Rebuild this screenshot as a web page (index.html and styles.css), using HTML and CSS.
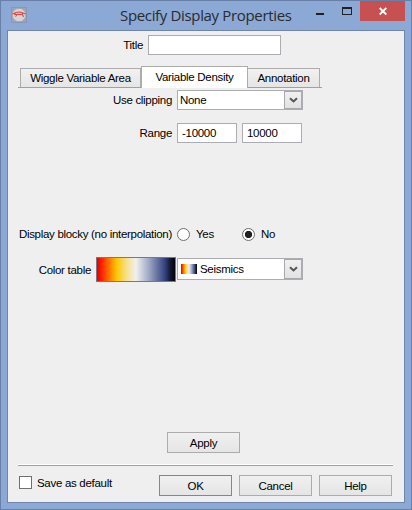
FILE: index.html
```html
<!DOCTYPE html>
<html lang="en">
<head>
<meta charset="utf-8">
<title>Specify Display Properties</title>
<link rel="stylesheet" href="styles.css">
</head>
<body>
<div class="window">
  <header class="titlebar">
    <svg class="app-icon" width="16" height="16" viewBox="0 0 16 16">
      <rect x=".5" y=".5" width="15" height="15" fill="#98a5c0" stroke="#8797b6"/>
      <circle cx="8" cy="8" r="6.8" fill="#d6d5d5" stroke="#aaa6aa"/>
      <path d="M1.500 7 5 5.500l3-.5 3 .5 3.500 1.500M4.500 5.500 3.500 8M4 7.500h7M11 5.500l1.500 4.500M6.500 7l-2 2.500" fill="none" stroke="#e64748" stroke-width="1.100"/>
    </svg>
    <h1 class="caption">Specify Display Properties</h1>
    <div class="controls">
      <svg width="26" height="20"><path d="M0 13h8v2H0z" fill="#1f1f1f"/></svg>
      <svg width="18" height="20"><path fill-rule="evenodd" d="M0 7h10v8H0zM1 9v5h8V9z" fill="#222"/></svg>
      <div class="close"><svg width="45" height="20"><path d="m19.700 8 6.600 6.500m0-6.500-6.600 6.500" stroke="#fff" stroke-width="1.800"/></svg></div>
    </div>
  </header>
  <main class="client">
    <div class="row title-row"><label class="label t-title">Title</label><div class="field title-field"></div></div>
    <nav class="tabs">
      <div class="tab wiggle"><span>Wiggle Variable Area</span></div>
      <div class="tab active"><span>Variable Density</span></div>
      <div class="tab annotation"><span>Annotation</span></div>
    </nav>
    <div class="row clip-row"><label class="label">Use clipping</label>
      <div class="combo"><span class="value">None</span><span class="arrow"><svg width="9" height="7"><path d="m1 1.300 3.500 3.200L8 1.300" fill="none" stroke="#555" stroke-width="2"/></svg></span></div>
    </div>
    <div class="row range-row"><label class="label">Range</label><div class="field number">-10000</div><div class="field number">10000</div></div>
    <div class="row blocky-row"><label class="label">Display blocky (no interpolation)</label>
      <div class="option yes"><i class="radio"></i><span>Yes</span></div>
      <div class="option"><i class="radio checked"></i><span>No</span></div>
    </div>
    <div class="row color-row"><label class="label color-label">Color table</label><div class="ramp"></div>
      <div class="combo color-combo"><i class="swatch"></i><span class="value">Seismics</span><span class="arrow"><svg width="9" height="7"><path d="m1 1.300 3.500 3.200L8 1.300" fill="none" stroke="#555" stroke-width="2"/></svg></span></div>
    </div>
    <div class="apply-row"><div class="button">Apply</div></div>
    <div class="separator"></div>
    <footer class="footer">
      <label class="save"><i class="checkbox"></i><span>Save as default</span></label>
      <div class="button ok">OK</div><div class="button">Cancel</div><div class="button">Help</div>
    </footer>
  </main>
</div>
</body>
</html>
```
FILE: styles.css
```css
* { box-sizing: border-box; }
body { margin: 0; font: 11.5px/14px "Liberation Sans", Arial, sans-serif; color: #000; letter-spacing: -0.3px; }
svg { display: block; }
.window { width: 412px; height: 510px; padding: 0 6px 6px; background: #8ca8d4; border: 1px solid #687fa8; }
.titlebar { height: 29px; display: flex; padding-left: 4px; }
.app-icon { margin-top: 6px; flex: none; }
.caption { margin: 4px 0 0 93px; width: 180px; font: 15px/21px "Open Sans", sans-serif; letter-spacing: -0.34px; color: #282b30; white-space: nowrap; }
.controls { display: flex; margin-left: auto; }
.controls svg { margin-top: -1px; flex: none; }
.close { width: 45px; height: 20px; background: #c75050; }
.client { height: 473px; border: 1px solid #6e86ae; background: #efefef; padding: 4px 10px 0; }
.row { display: flex; align-items: center; }
.label { width: 154px; margin-right: 5px; text-align: right; white-space: nowrap; flex: none; }
.title-row { height: 20px; }
.t-title { width: 125px; }
.field { height: 20px; padding: 2px 4px; background: #fff; border: 1px solid #abadb3; }
.title-field { width: 133px; }
.tabs { display: flex; align-items: flex-end; width: 304px; height: 22px; margin-top: 11px; padding-left: 2px; border-bottom: 1px solid #a0a0a0; }
.tab { height: 19px; padding-top: 2px; text-align: center; border: 1px solid #acacac; border-bottom: 0; background: linear-gradient(#f1f1f1, #e5e5e5); white-space: nowrap; }
.wiggle { width: 121px; }
.active { width: 107px; height: 22px; padding-top: 3px; margin-bottom: -1px; background: #fff; }
.annotation { width: 73px; margin-left: -1px; }
.clip-row { height: 20px; margin-top: 2px; }
.combo { display: flex; align-items: center; width: 126px; height: 20px; padding-left: 2px; border: 1px solid #abadb3; border-right-width: 2px; background: #fff; }
.arrow { display: grid; place-items: center; align-self: stretch; width: 17px; margin-left: auto; background: linear-gradient(#f0f0f0, #e2e2e2); border: 1px solid #a8a8ac; border-width: 1px 0 1px 1px; }
.range-row { height: 20px; margin-top: 13px; }
.number { width: 60px; margin-right: 5px; }
.blocky-row { height: 14px; margin-top: 84px; }
.option { display: flex; align-items: center; }
.yes { width: 65px; }
.radio { width: 13px; height: 13px; margin-right: 6px; border: 1px solid #707070; border-radius: 50%; background: #fff; }
.checked { background: radial-gradient(circle, #222 0 3.300px, #fff 4px); }
.color-row { height: 25px; margin-top: 16px; }
.color-label { width: 73px; }
.ramp { width: 80px; height: 25px; border: 1px solid #777883; }
.ramp, .swatch { background: linear-gradient(90deg, #e00000 0%, #ff2200 6%, #ffc500 25%, #f6df82 37%, #f1f0ef 50%, #a6afc9 65%, #34437e 87%, #111832 94%, #02030a 100%); }
.color-combo { height: 22px; margin: -1px 0 0 1px; padding-left: 3px; }
.swatch { width: 16px; height: 10px; margin-right: 3px; }
.apply-row { margin: 150px 0 0 149px; }
.button { width: 73px; height: 21px; padding-top: 3px; text-align: center; border: 1px solid #acacac; background: linear-gradient(#f0f0f0, #e5e5e5); }
.separator { width: 375px; height: 2px; margin-top: 11px; border-top: 1px solid #fff; border-bottom: 1px solid #a0a0a0; }
.footer { display: flex; gap: 7px; margin-top: 9px; }
.save { display: flex; align-items: center; width: 134px; height: 15px; padding-left: 1px; }
.checkbox { width: 13px; height: 13px; margin-right: 5px; border: 1px solid #707070; background: #fff; }
.button.ok { border-color: #3399ff; }
```
